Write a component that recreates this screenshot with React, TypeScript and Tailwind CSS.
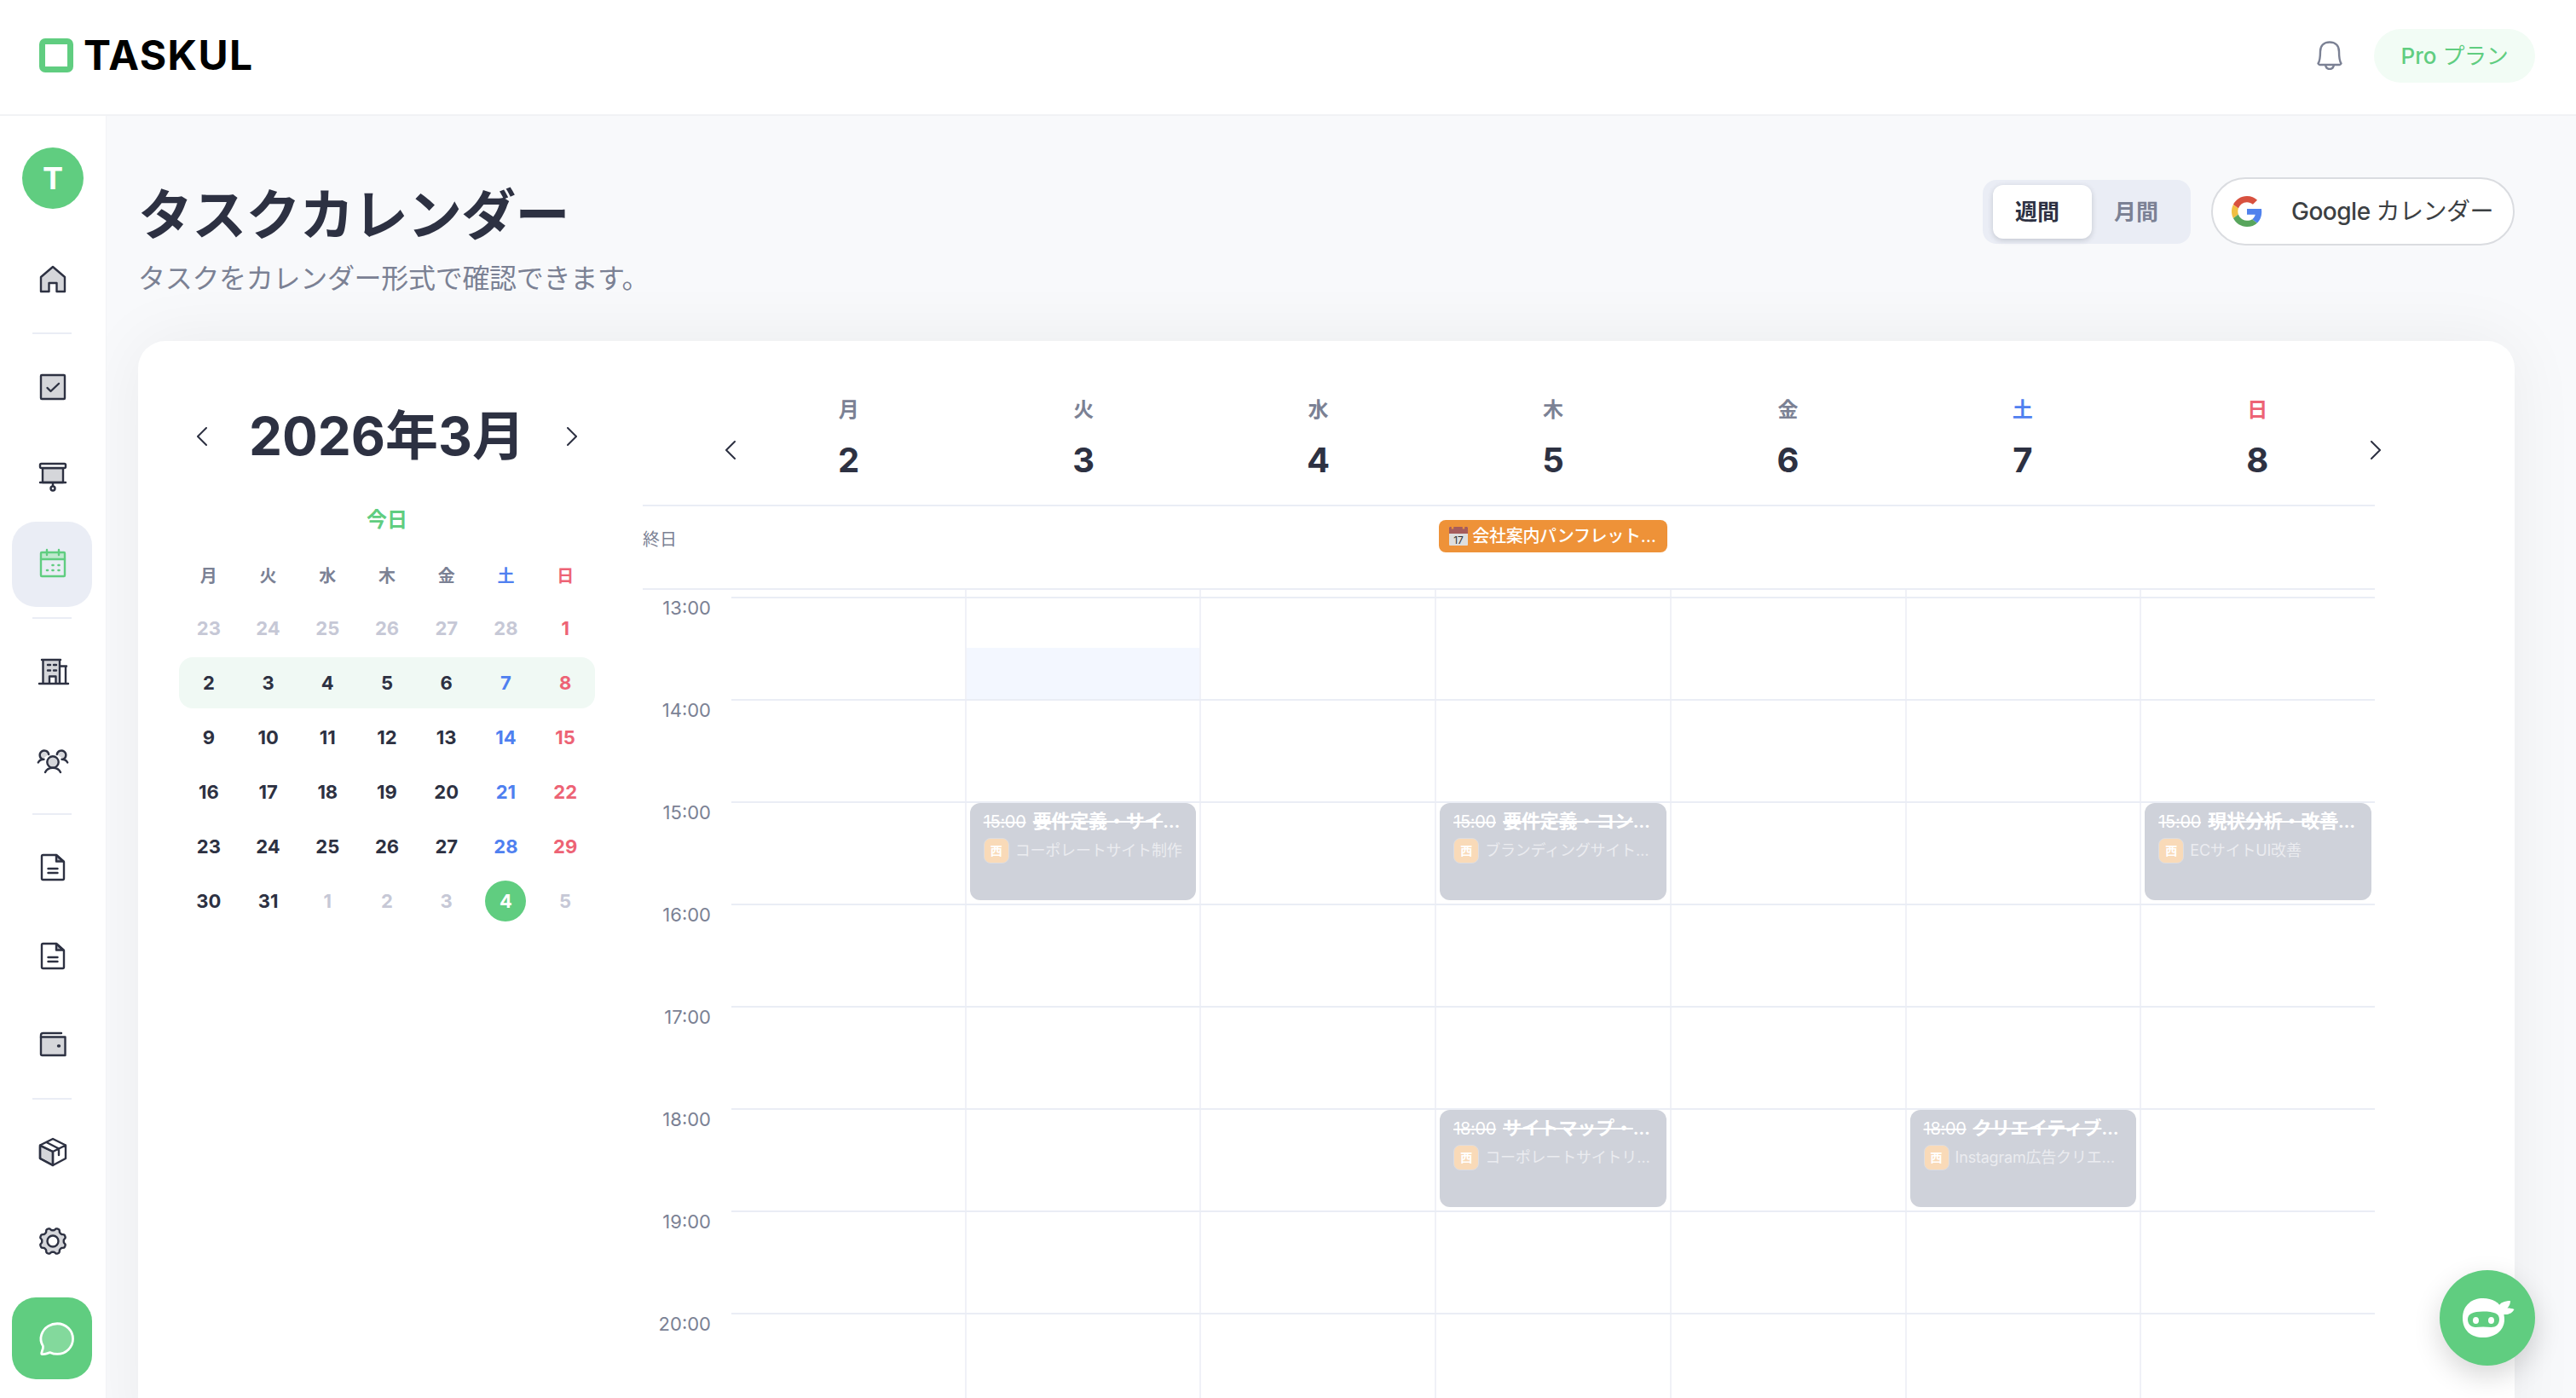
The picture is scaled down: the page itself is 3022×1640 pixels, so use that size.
import type { ReactNode } from 'react';

const WEEKDAYS = ['月', '火', '水', '木', '金', '土', '日'];

const MONTH = [
  [23, 24, 25, 26, 27, 28, 1],
  [2, 3, 4, 5, 6, 7, 8],
  [9, 10, 11, 12, 13, 14, 15],
  [16, 17, 18, 19, 20, 21, 22],
  [23, 24, 25, 26, 27, 28, 29],
  [30, 31, 1, 2, 3, 4, 5],
];

const HOURS = [13, 14, 15, 16, 17, 18, 19, 20];

interface Task {
  day: number;
  hour: number;
  title: string;
  project: string;
  cut?: boolean;
}

const TASKS: Task[] = [
  { day: 1, hour: 15, title: '要件定義・サイ', project: 'コーポレートサイト制作' },
  { day: 3, hour: 15, title: '要件定義・コン', project: 'ブランディングサイト', cut: true },
  { day: 6, hour: 15, title: '現状分析・改善', project: 'ECサイトUI改善' },
  { day: 3, hour: 18, title: 'サイトマップ・', project: 'コーポレートサイトリ', cut: true },
  { day: 5, hour: 18, title: 'クリエイティブ', project: 'Instagram広告クリエ', cut: true },
];

function Icon({ children, className = 'size-10' }: { children: ReactNode; className?: string }) {
  return (
    <svg
      viewBox="0 0 40 40"
      fill="none"
      stroke="currentColor"
      strokeWidth="2.400"
      strokeLinecap="round"
      strokeLinejoin="round"
      className={className}
    >
      {children}
    </svg>
  );
}

const HomeIcon = () => (
  <Icon>
    <path d="M6 17 20 5l14 12v17h-9.500V24h-9v10H6z" fill="#d5d6da" />
  </Icon>
);

const CheckIcon = () => (
  <Icon>
    <rect x="6" y="6" width="28" height="28" rx="1" fill="#d5d6da" />
    <path d="m13.500 21 4 4 9.500-9" />
  </Icon>
);

const BoardIcon = () => (
  <Icon>
    <path d="M8 11h24v17H8z" fill="#d5d6da" />
    <rect x="5" y="6" width="30" height="5" rx="1.500" fill="#fff" />
    <path d="M5 28h30M20 28v4" />
    <circle cx="20" cy="35" r="2.500" fill="#fff" />
  </Icon>
);

const CalendarIcon = () => (
  <Icon>
    <path d="M6 6h28v8H6z" fill="#bfe9cf" stroke="none" />
    <rect x="6" y="6" width="28" height="28" rx="1" />
    <path d="M6 14h28M13 3v6M27 3v6" />
    <path d="M19.500 21h1M26.500 21h1M13 27h1M19.500 27h1M26.500 27h1" strokeWidth="2.600" />
  </Icon>
);

const BuildingIcon = () => (
  <Icon>
    <path d="M8 6h20v28h-4.500v-8H16v8H8z" fill="#d5d6da" stroke="none" />
    <path d="M7 6h22M8.500 6v28M28 6v28M28 13.500h8M35 13.500v20M4 34h34M16 34v-8.500h7.500V34M14 12h3M21 12h3M14 18.500h3M21 18.500h3" />
  </Icon>
);

const TeamIcon = () => (
  <Icon>
    <path d="M7.500 18.500A5.300 5.300 0 1 1 15.200 13M32.500 18.500A5.300 5.300 0 1 0 24.800 13" fill="#d5d6da" />
    <path d="M2.800 22.500c1-2 3.500-3.800 6.700-3.800M37.200 22.500c-1-2-3.500-3.800-6.700-3.800" />
    <circle cx="20" cy="22" r="6.700" fill="#d5d6da" />
    <path d="M11 34c1.500-3.500 5-5.300 9-5.300s7.500 1.800 9 5.300" />
  </Icon>
);

const FileIcon = () => (
  <Icon>
    <path d="M24 5v7.500h8.500z" fill="#a9abb5" />
    <path d="M24 5H8.500A1.500 1.500 0 0 0 7 6.500v26A1.500 1.500 0 0 0 8.500 34h23a1.500 1.500 0 0 0 1.500-1.500V13zM14.500 21h11M14.500 26h11" />
  </Icon>
);

const WalletIcon = () => (
  <Icon>
    <path d="M6 10.500h28.500V32H7.500A1.500 1.500 0 0 1 6 30.500z" fill="#d5d6da" />
    <path d="M6 11V8.500A2.500 2.500 0 0 1 8.500 6H30" />
    <path d="M26.500 21h1" strokeWidth="3.400" />
  </Icon>
);

const BoxIcon = () => (
  <Icon>
    <path d="M5 12v15l15 8V19z" fill="#d5d6da" />
    <path d="m20 4 15 7.500V27l-15 8L5 27V11.500zM5 11.500 20 19l15-7.500M20 19v16M12.500 8 27 15.500V23" />
  </Icon>
);

// eight soft teeth with the gaps on the axes
const GEAR = Array.from({ length: 96 }, (_, i) => {
  const a = (i / 96) * Math.PI * 2;
  const r = 14.1 + 1.4 * Math.tanh(-2 * Math.cos(8 * a));
  return `${(20 + r * Math.cos(a)).toFixed(2)},${(20 + r * Math.sin(a)).toFixed(2)}`;
}).join(' ');

const GearIcon = () => (
  <Icon>
    <polygon points={GEAR} fill="#d5d6da" />
    <circle cx="20" cy="20" r="6.500" fill="#fff" />
  </Icon>
);

const Chevron = ({ right = false }: { right?: boolean }) => (
  <svg viewBox="0 0 12 22" fill="none" stroke="#2d3142" strokeWidth="2" strokeLinecap="round" className="h-[22px] w-3">
    <path d={right ? 'm1 1 10 10L1 21' : 'M11 1 1 11l10 10'} />
  </svg>
);

function NavItem({ children, active = false }: { children: ReactNode; active?: boolean }) {
  return (
    <a
      className={`flex h-[100px] w-[94px] items-center justify-center rounded-[28px] pl-0.5 ${
        active ? 'bg-[#eaedf5] text-[#60cd80]' : 'text-[#2d3142]'
      }`}
    >
      {children}
    </a>
  );
}

const Divider = () => <div className="my-2 h-0.5 w-[46px] bg-[#eaedf5]" />;

function Sidebar() {
  return (
    <aside className="flex w-[124px] shrink-0 flex-col items-center gap-1 bg-white pt-[37px] pr-0.5">
      <div className="mb-[29px] ml-0.5 flex size-[72px] items-center justify-center rounded-full bg-[#60cd80] text-4xl font-bold text-white">
        T
      </div>
      <NavItem><HomeIcon /></NavItem>
      <Divider />
      <NavItem><CheckIcon /></NavItem>
      <NavItem><BoardIcon /></NavItem>
      <NavItem active><CalendarIcon /></NavItem>
      <Divider />
      <NavItem><BuildingIcon /></NavItem>
      <NavItem><TeamIcon /></NavItem>
      <Divider />
      <NavItem><FileIcon /></NavItem>
      <NavItem><FileIcon /></NavItem>
      <NavItem><WalletIcon /></NavItem>
      <Divider />
      <NavItem><BoxIcon /></NavItem>
      <NavItem><GearIcon /></NavItem>
      <button className="mt-3 flex h-24 w-[94px] items-center justify-center rounded-[28px] bg-[#60cd80] pl-2.5 text-white">
        <Icon className="size-[46px]">
          <path d="M5 36c-.500-2 2-5 1.500-8C4 24 4 19 5 16 8 8 15 5 21 5c9 0 16 7 16 15.500S30 36 21 36c-3 0-5-.500-7-1.500C11 35 8 37 5 36z" fill="#83d99c" />
        </Icon>
      </button>
    </aside>
  );
}

function Header() {
  return (
    <header className="flex h-[136px] shrink-0 items-start justify-between border-b-2 border-[#f1f2f5] bg-white pr-12 pl-[46px]">
      <div className="flex h-[130px] items-center gap-3">
        <div className="size-10 rounded-[7px] border-7 border-[#60cd80]" />
        <span className="text-[48px] font-bold tracking-[1.400px] text-black">TASKUL</span>
      </div>
      <div className="flex h-[131px] items-center gap-[37px]">
        <svg viewBox="0 0 30 34" fill="none" stroke="#7b8194" strokeWidth="2.400" strokeLinejoin="round" className="mb-0.5 h-[34px] w-[30px]">
          <path d="M1.500 26.500c2-3 2.500-6 2.500-14C4 5 9 1.500 15 1.500S26 5 26 12.500c0 8 .500 11 2.500 14-.500 1-1 1.500-2 1.500h-23c-1 0-1.500-.500-2-1.500z" />
          <path d="M10 28c.500 3 2.500 5 5 5s4.500-2 5-5" />
        </svg>
        <div className="flex h-[63px] w-[189px] items-center justify-center rounded-full bg-[#f2fcf5] text-[26px] font-medium text-[#60cd80]">
          <span>Pro <span className="font-normal tracking-[-0.300px]">プラン</span></span>
        </div>
      </div>
    </header>
  );
}

const GoogleLogo = () => (
  <svg viewBox="0 0 48 48" className="size-9">
    <path fill="#d8513f" d="M24 9.500c3.540 0 6.710 1.220 9.210 3.600l6.850-6.850C35.900 2.380 30.470 0 24 0 14.620 0 6.510 5.380 2.560 13.220l7.980 6.190C12.430 13.720 17.740 9.500 24 9.500z" />
    <path fill="#5082ed" d="M46.980 24.550c0-1.570-.150-3.090-.380-4.550H24v9.020h12.940c-.580 2.960-2.260 5.480-4.780 7.180l7.730 6c4.510-4.180 7.090-10.360 7.090-17.650z" />
    <path fill="#f1bf42" d="M10.530 28.590c-.480-1.450-.760-2.990-.760-4.590s.270-3.140.760-4.590l-7.980-6.190C.920 16.460 0 20.120 0 24c0 3.880.920 7.540 2.560 10.780l7.970-6.190z" />
    <path fill="#58a55c" d="M24 48c6.480 0 11.930-2.130 15.890-5.810l-7.730-6c-2.150 1.450-4.920 2.300-8.160 2.300-6.260 0-11.570-4.220-13.470-9.910l-7.980 6.190C6.510 42.620 14.620 48 24 48z" />
  </svg>
);

function weekdayColor(col: number) {
  if (col === 5) return 'text-[#4f80f0]';
  if (col === 6) return 'text-[#ed6375]';
  return 'text-[#7b8194]';
}

function dayColor(col: number, muted: boolean) {
  if (muted) return 'text-[#c6c8d6]';
  return col < 5 ? 'text-[#2d3142]' : weekdayColor(col);
}

function MiniCalendar() {
  return (
    <div className="ml-12 w-[488px] shrink-0">
      <div className="mt-[76px] flex h-[72px] items-center justify-between px-[21px]">
        <Chevron />
        <h2 className="text-[62px] leading-none font-bold whitespace-nowrap text-[#2d3142]">
          2026年3月
        </h2>
        <Chevron right />
      </div>
      <div className="mt-[50px] text-center text-2xl leading-6 font-bold text-[#60cd80]">今日</div>
      <div className="mt-10 grid grid-cols-7 text-center text-xl leading-7 font-bold">
        {WEEKDAYS.map((d, i) => (
          <span key={d} className={weekdayColor(i)}>{d}</span>
        ))}
      </div>
      <div className="mt-[17px] flex flex-col gap-1">
        {MONTH.map((week, r) => (
          <div
            key={r}
            className={`grid h-[60px] grid-cols-7 items-center justify-items-center rounded-2xl text-[22px] font-bold ${
              r === 1 ? 'bg-[#f0f9f4]' : ''
            }`}
          >
            {week.map((n, c) => {
              const muted = (r === 0 && n > 7) || (r === 5 && n < 8);
              const today = r === 5 && c === 5;
              return (
                <span
                  key={c}
                  className={`flex size-12 items-center justify-center rounded-full ${
                    today ? 'bg-[#60cd80] text-white' : dayColor(c, muted)
                  }`}
                >
                  {n}
                </span>
              );
            })}
          </div>
        ))}
      </div>
    </div>
  );
}

function TaskCard({ task }: { task: Task }) {
  return (
    <div className="mx-1 h-[114px] overflow-hidden rounded-xl bg-[#cfd2da] px-4 pt-[7px] text-white">
      <div className="flex items-baseline leading-7 whitespace-nowrap">
        <span className="mr-2 w-[50px] text-xl tracking-[-0.300px] line-through">{task.hour}:00</span>
        <span className="text-[22px] font-bold tracking-[-0.200px] line-through">{task.title}</span>
        <span className="text-[20px] leading-none font-bold tracking-[-1px]">…</span>
      </div>
      <div className="mt-[5px] flex items-center gap-[7px] whitespace-nowrap">
        <span className="flex size-[30px] shrink-0 items-center justify-center rounded-lg border border-[#dcdde2] bg-[#f9dab8] text-sm leading-none font-bold">
          西
        </span>
        <span className="text-lg leading-7 tracking-[-0.200px] text-[#ebecf0]">
          {task.project}
          {task.cut && '…'}
        </span>
      </div>
    </div>
  );
}

function WeekView() {
  return (
    <div className="ml-14 flex w-[2032px] flex-col">
      <div className="flex h-[194px] border-b-2 border-[#eaedf5]">
        <div className="flex w-[104px] shrink-0 justify-end pt-[117px]">
          <div className="-mr-[5px]"><Chevron /></div>
        </div>
        <div className="grid flex-1 grid-cols-7 text-center">
          {WEEKDAYS.map((d, i) => (
            <div key={d} className="pt-[66px]">
              <div className={`text-2xl leading-[30px] font-bold ${weekdayColor(i)}`}>{d}</div>
              <div className="mt-5 text-[40px] leading-[48px] font-bold text-[#2d3142]">{i + 2}</div>
            </div>
          ))}
        </div>
        <div className="-mr-[7px] ml-[-5px] pt-[117px]"><Chevron right /></div>
      </div>

      <div className="flex h-[98px] border-b-2 border-[#eaedf5]">
        <div className="w-[104px] shrink-0 pt-[25px] text-xl leading-7 text-[#7b8194]">終日</div>
        <div className="grid flex-1 grid-cols-7">
          <div className="col-start-4 mx-1 mt-4 flex h-[38px] min-w-0 items-center gap-[5px] rounded-lg bg-[#ee9238] px-3 text-xl whitespace-nowrap text-white">
            <svg viewBox="0 0 22 22" className="size-[22px] shrink-0">
              <rect width="22" height="22" rx="1" fill="#dedede" />
              <path d="M0 1a1 1 0 0 1 1-1h20a1 1 0 0 1 1 1v7H0z" fill="#a65c5c" />
              <path d="M4 0v2.500M17 0v2.500" stroke="#ee9238" strokeWidth="2.500" />
              <text x="11" y="19.500" textAnchor="middle" fontSize="12" fill="#333">17</text>
            </svg>
            <span className="font-medium tracking-[-0.300px]">会社案内パンフレット…</span>
          </div>
        </div>
      </div>

      {/* hour grid, scrolled so that the 13:00 row is just below the header */}
      <div className="flex h-[948px] overflow-hidden">
        <div className="flex w-[104px] shrink-0 flex-col pt-2">
          {HOURS.map((h) => (
            <div key={h} className="h-[120px] shrink-0 pr-6 text-right text-[22px] leading-[26px] text-[#7b8194]">
              {h}:00
            </div>
          ))}
        </div>
        <div className="-mr-0.5 grid flex-1 grid-cols-7">
          {WEEKDAYS.map((d, col) => (
            <div key={d} className={`border-r-2 pt-2 ${col < 6 ? 'border-[#f0f1f7]' : 'border-transparent'}`}>
              {HOURS.map((h) => {
                const task = TASKS.find((t) => t.day === col && t.hour === h);
                return (
                  <div key={h} className="-mr-0.5 h-[120px] border-t-2 border-[#eaedf5] pr-0.5">
                    {task && <TaskCard task={task} />}
                    {col === 1 && h === 13 && <div className="mt-[58px] h-[60px] bg-[#f3f7ff]" />}
                  </div>
                );
              })}
            </div>
          ))}
        </div>
      </div>
    </div>
  );
}

function ChatButton() {
  return (
    <button className="fixed right-12 bottom-[38px] flex size-28 items-center justify-center rounded-full bg-[#60cd80] shadow-[0_12px_32px_rgba(0,0,0,0.16)]">
      <svg viewBox="0 0 64 52" className="h-[52px] w-16">
        <path d="M27 3c11 0 19 5 22.500 12.500 2 5 2.500 9 2.500 13C51.500 41 41 49 27 49S3 41 3 26 14 3 27 3z" fill="#fff" />
        <path d="M45 13c2-5 7-7 14-7 0 3-1 6-3.500 8.500 3 0 5.500.500 8 1.500-2 4-6 6.500-12.500 6z" fill="#fff" />
        <path d="M27 18.500c13 0 19 2.500 19 9s-4 9.500-9.500 9.500c-6-.800-13-.800-18.500 0-5 0-9-3.500-9-9.500s6-9 18-9z" fill="#60cd80" />
        <ellipse cx="18.500" cy="29" rx="3.500" ry="4" fill="#fff" />
        <ellipse cx="36.500" cy="29" rx="3.500" ry="4" fill="#fff" />
      </svg>
    </button>
  );
}

export default function App() {
  return (
    <div className="flex h-[1640px] w-[3022px] flex-col overflow-hidden bg-[#f8f9fb] font-[Inter,'Noto_Sans_CJK_JP',sans-serif]">
      <Header />
      <div className="flex min-h-0 flex-1">
        <Sidebar />
        <main className="flex flex-1 flex-col overflow-hidden border-l border-[#f2f3f6] pr-[72px] pl-[37px]">
          <div className="flex h-[264px] shrink-0 items-start justify-between">
            <div className="pt-[78px]">
              <h1 className="text-[64px] leading-[76px] font-bold tracking-[-0.800px] text-[#2d3142]">タスクカレンダー</h1>
              <p className="mt-[15px] text-[32px] leading-[44px] tracking-[-0.300px] text-[#7b8194]">タスクをカレンダー形式で確認できます。</p>
            </div>
            <div className="mt-[72px] flex h-20 items-center gap-6">
              <div className="flex h-[75px] w-[244px] rounded-2xl bg-[#eaedf5] py-1.5 pl-3 text-[26px] font-bold">
                <button className="flex w-[116px] items-center rounded-xl bg-white pl-[26px] text-[#2d3142] shadow-[0_2px_6px_rgba(45,49,66,0.2)]">
                  週間
                </button>
                <button className="flex items-center pl-[26px] text-[#7b8194]">月間</button>
              </div>
              <button className="flex h-20 w-[356px] items-center gap-[34px] rounded-full border-2 border-[#dadce0] bg-white pl-[22px] text-[28px] font-medium tracking-[-0.500px] whitespace-nowrap text-[#3c4043]">
                <GoogleLogo />
                <span>Google <span className="font-normal">カレンダー</span></span>
              </button>
            </div>
          </div>
          <div className="flex h-[1300px] shrink-0 rounded-[32px] bg-white shadow-[0_0_80px_rgba(0,0,0,0.06)]">
            <MiniCalendar />
            <WeekView />
          </div>
        </main>
      </div>
      <ChatButton />
    </div>
  );
}
